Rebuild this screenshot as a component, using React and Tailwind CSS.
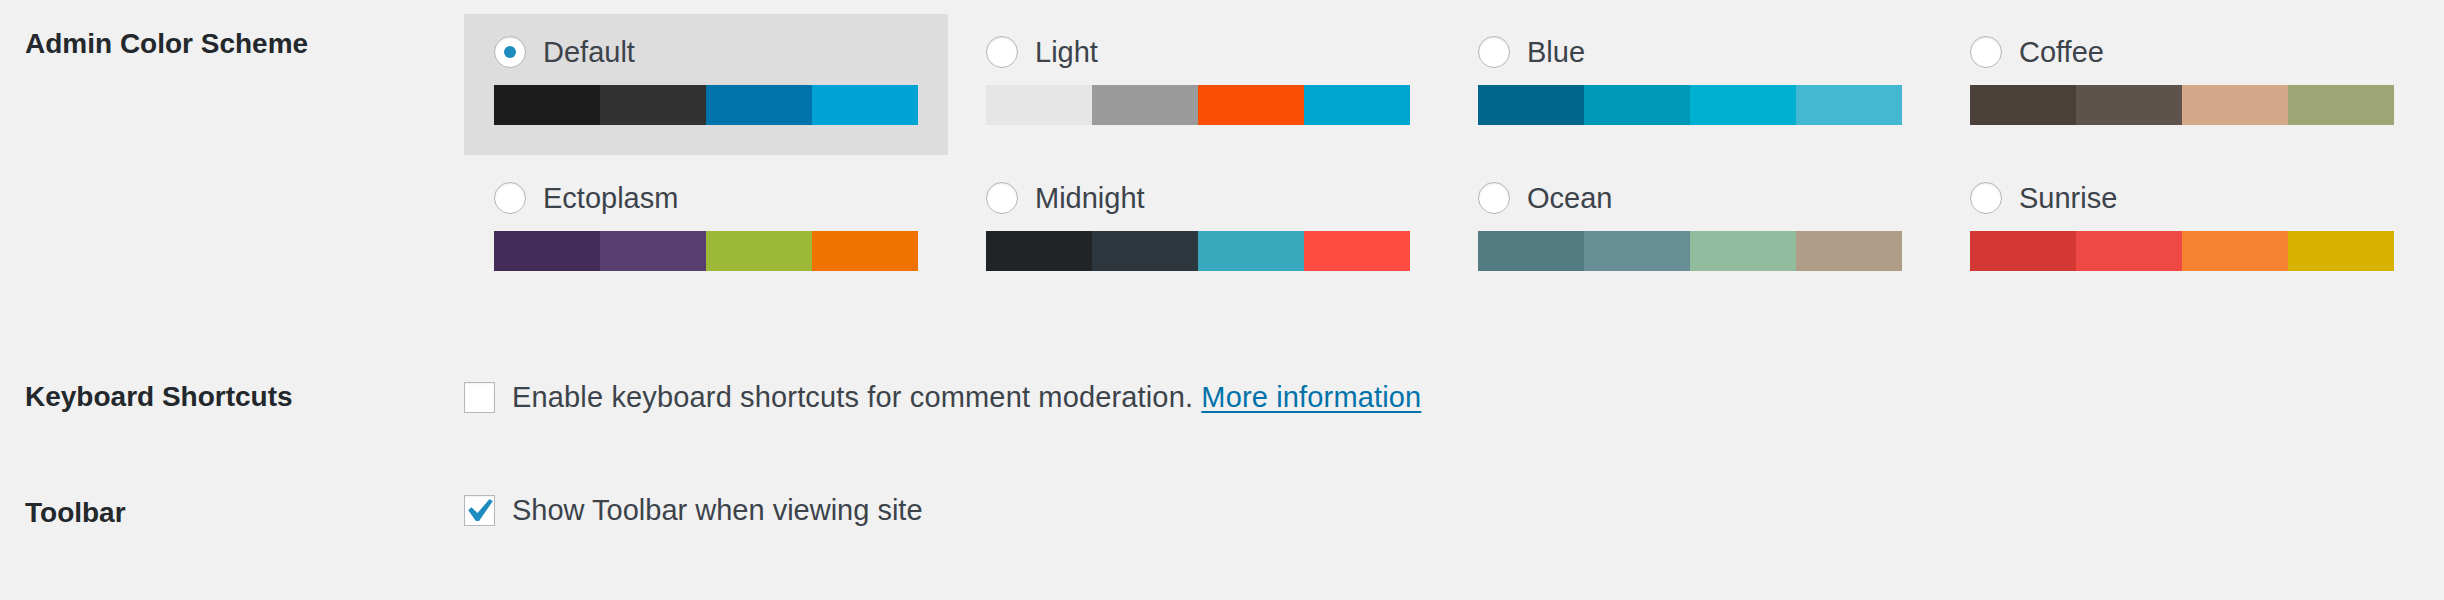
import React from "react";

// 配色方案資料
const schemes = [
  { name: "Default", colors: ["#1c1c1c", "#313131", "#0073ab", "#00a3d5"], checked: true },
  { name: "Light", colors: ["#e6e6e6", "#9b9b9b", "#fb4e05", "#00a6d0"] },
  { name: "Blue", colors: ["#00668a", "#0098b7", "#00b0d0", "#44b7d1"] },
  { name: "Coffee", colors: ["#4a3f39", "#5d524c", "#d4a788", "#9ea574"] },
  { name: "Ectoplasm", colors: ["#432c58", "#573e6e", "#9db937", "#f07200"] },
  { name: "Midnight", colors: ["#202427", "#2e363d", "#38a8bd", "#fe4c42"] },
  { name: "Ocean", colors: ["#537c82", "#678d95", "#93bb9d", "#b09d87"] },
  { name: "Sunrise", colors: ["#d33835", "#ee4944", "#f68332", "#d7b200"] },
];

const Radio = ({ checked }) => (
  <div className="w-[32px] h-[32px] rounded-full bg-white border-[1.5px] border-[#b4b9be] shadow-[inset_0_1px_2px_rgba(0,0,0,0.1)] flex items-center justify-center shrink-0">
    {checked && <div className="w-[12px] h-[12px] rounded-full bg-[#1e8cbe]" />}
  </div>
);

const Checkbox = ({ checked }) => (
  <div className="relative w-[31px] h-[31px] bg-white border-[1.5px] border-[#b4b9be] shadow-[inset_0_1px_2px_rgba(0,0,0,0.07)] shrink-0">
    {checked && (
      <svg
        className="absolute left-[3px] top-[3px]"
        width="25"
        height="22"
        viewBox="5.78 4.89 10.39 9.32"
      >
        <path
          fill="#1e8cbe"
          d="M14.83 4.89l1.34.94-5.81 8.38H9.02L5.78 9.67l1.34-1.25 2.57 2.4z"
        />
      </svg>
    )}
  </div>
);

const SchemeOption = ({ scheme }) => (
  <div
    className={`pt-[22px] px-[30px] pb-[30px] ${scheme.checked ? "bg-[#dddddd]" : ""}`}
  >
    <div className="flex items-center gap-[17px] h-[32px]">
      <Radio checked={scheme.checked} />
      <span className="text-[29px] leading-[40px] text-[#3c434a]">{scheme.name}</span>
    </div>
    <div className="flex mt-[17px] h-[40px]">
      {scheme.colors.map((c, i) => (
        <div key={i} className="flex-1" style={{ backgroundColor: c }} />
      ))}
    </div>
  </div>
);

export default function App() {
  return (
    <div className="h-[600px] w-full bg-[#f1f1f1] pt-[14px] font-['Liberation_Sans',Arial,sans-serif] overflow-hidden">
      {/* 管理介面配色 */}
      <div className="flex">
        <div className="w-[464px] shrink-0 pl-[25px] pt-[10px] text-[28px] leading-[40px] font-bold text-[#23282d]">
          Admin Color Scheme
        </div>
        <div className="grid grid-cols-[repeat(4,484px)] gap-x-[8px] gap-y-[5px]">
          {schemes.map((s) => (
            <SchemeOption key={s.name} scheme={s} />
          ))}
        </div>
      </div>

      {/* 鍵盤快捷鍵 */}
      <div className="flex items-center h-[40px] mt-[76px]">
        <div className="w-[464px] shrink-0 pl-[25px] text-[28px] leading-[40px] font-bold text-[#23282d]">
          Keyboard Shortcuts
        </div>
        <div className="flex items-center gap-[17px]">
          <Checkbox />
          <span className="text-[29px] leading-[40px] tracking-[0.15px] text-[#3c434a]">
            Enable keyboard shortcuts for comment moderation.{" "}
            <a
              href="#"
              className="text-[#0073aa] underline decoration-[1.5px] underline-offset-[4px]"
            >
              More information
            </a>
          </span>
        </div>
      </div>

      {/* 工具列 */}
      <div className="flex items-start h-[40px] mt-[76px]">
        <div className="w-[464px] shrink-0 pl-[25px] text-[28px] leading-[40px] font-bold text-[#23282d]">
          Toolbar
        </div>
        <div className="flex items-center gap-[17px] h-[40px] -mt-[3px]">
          <Checkbox checked />
          <span className="text-[29px] leading-[40px] text-[#3c434a]">
            Show Toolbar when viewing site
          </span>
        </div>
      </div>
    </div>
  );
}
